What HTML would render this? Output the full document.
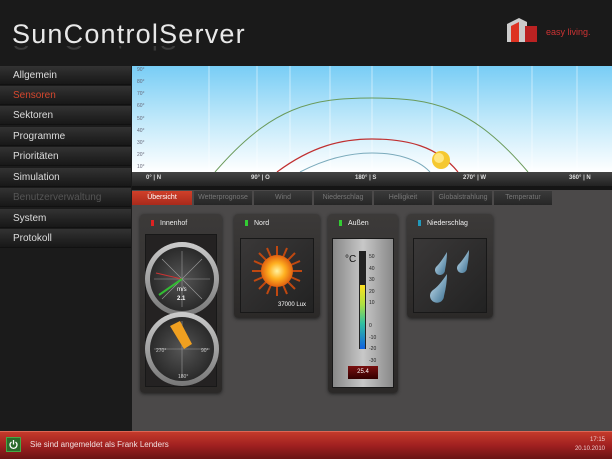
<!DOCTYPE html>
<html><head><meta charset="utf-8"><style>
*{margin:0;padding:0;box-sizing:border-box}
body{width:612px;height:459px;overflow:hidden;background:#1b1b1b;font-family:"Liberation Sans",sans-serif;position:relative}
.a{position:absolute}
.menu div{position:absolute;left:0;width:131px;height:19px;background:linear-gradient(#333,#222 60%,#181818);color:#ddd;font-size:10px;line-height:19px;padding-left:13px;border-bottom:1px solid #111}
.tab{position:absolute;top:191px;height:14px;width:58px;background:linear-gradient(#3a3a3a,#262626);color:#777;font-size:7px;text-align:center;line-height:14px}
.card{position:absolute;background:linear-gradient(#3c3a39,#2b2928);border-radius:4px;box-shadow:0 1px 3px #222}
.card .t{position:absolute;left:20px;top:6px;color:#eee;font-size:7px}
.card .led{position:absolute;left:11px;top:6px;width:3px;height:6px}
.inner{position:absolute;background:#242222;border:1px solid #181818}
.ax{position:absolute;top:175px;color:#ddd;font-size:6px;font-weight:bold}
.yl{position:absolute;left:137px;color:#667;font-size:5px}
</style></head><body>
<div class="a" style="left:0;top:0;width:612px;height:66px;background:#1a1a1a"></div>
<div class="a" style="left:12px;top:20px;color:#e8e8e8;font-size:27px;letter-spacing:1.2px;font-weight:normal;line-height:28px">SunControlServer</div>
<div class="a" style="left:12px;top:46px;width:250px;height:6px;overflow:hidden"><div style="color:#3a3a3a;font-size:27px;letter-spacing:1.2px;line-height:28px;transform:scaleY(-1);margin-top:-20px">SunControlServer</div></div>
<svg class="a" style="left:505px;top:14px" width="40" height="30"><path d="M2 10 L14 4 L22 8 L22 28 L2 28Z" fill="#ccc"/><path d="M6 12 L14 8 L14 28 L6 28Z" fill="#d32"/><path d="M20 12 L32 12 L32 28 L20 28Z" fill="#b22"/></svg>
<div class="a" style="left:546px;top:27px;color:#c33;font-size:9px">easy living.</div>

<div class="menu">
<div style="top:66px">Allgemein</div>
<div style="top:86px;color:#d4472e">Sensoren</div>
<div style="top:106px">Sektoren</div>
<div style="top:127px">Programme</div>
<div style="top:147px">Prioritäten</div>
<div style="top:168px">Simulation</div>
<div style="top:188px;color:#555">Benutzerverwaltung</div>
<div style="top:209px">System</div>
<div style="top:229px">Protokoll</div>
</div>

<div class="a" style="left:132px;top:66px;width:480px;height:106px;background:linear-gradient(#78cdf5,#bfe8fa 50%,#fff)"></div>
<svg class="a" style="left:132px;top:66px" width="480" height="106">
<g stroke="#fff" stroke-opacity=".5" stroke-width="1">
<line x1="77" y1="0" x2="77" y2="106"/><line x1="125" y1="0" x2="125" y2="106"/><line x1="158" y1="0" x2="158" y2="106"/><line x1="198" y1="0" x2="198" y2="106"/><line x1="240" y1="0" x2="240" y2="106"/><line x1="300" y1="0" x2="300" y2="106"/><line x1="346" y1="0" x2="346" y2="106"/><line x1="400" y1="0" x2="400" y2="106"/><line x1="445" y1="0" x2="445" y2="106"/></g>
<path d="M83 106 C140 40,180 32,240 32 C300 32,340 40,396 106" fill="none" stroke="#6a9a5a" stroke-width="1"/>
<path d="M145 106 C180 80,210 73,240 73 C275 73,305 80,326 106" fill="none" stroke="#c03030" stroke-width="1.2"/>
<path d="M168 106 C195 92,220 87,240 87 C262 87,285 92,298 106" fill="none" stroke="#7aaabb" stroke-width="1"/>
<circle cx="309" cy="94" r="9" fill="#f5c830"/><circle cx="307" cy="92" r="5" fill="#ffe680"/>
</svg>
<div class="yl" style="top:67px">90°</div><div class="yl" style="top:79px">80°</div><div class="yl" style="top:91px">70°</div><div class="yl" style="top:103px">60°</div><div class="yl" style="top:116px">50°</div><div class="yl" style="top:128px">40°</div><div class="yl" style="top:140px">30°</div><div class="yl" style="top:152px">20°</div><div class="yl" style="top:164px">10°</div>
<div class="a" style="left:132px;top:172px;width:480px;height:14px;background:linear-gradient(#444,#222)"></div>
<div class="ax" style="left:146px">0° | N</div><div class="ax" style="left:251px">90° | O</div><div class="ax" style="left:355px">180° | S</div><div class="ax" style="left:463px">270° | W</div><div class="ax" style="left:569px">360° | N</div>
<div class="a" style="left:132px;top:186px;width:480px;height:245px;background:#4b4949"></div>
<div class="a" style="left:132px;top:186px;width:480px;height:4px;background:#151515"></div>
<div class="tab" style="left:132px;width:60px;background:linear-gradient(#d0402a,#a82a1c);color:#fff">Übersicht</div>
<div class="tab" style="left:194px">Wetterprognose</div><div class="tab" style="left:254px">Wind</div><div class="tab" style="left:314px">Niederschlag</div><div class="tab" style="left:374px">Helligkeit</div><div class="tab" style="left:434px">Globalstrahlung</div><div class="tab" style="left:494px">Temperatur</div>

<div class="card" style="left:140px;top:214px;width:82px;height:179px"><div class="led" style="background:#d22"></div><div class="t">Innenhof</div>
<div class="inner" style="left:5px;top:20px;width:72px;height:153px"></div></div>
<svg class="a" style="left:140px;top:240px" width="84" height="150">
<defs><radialGradient id="g"><stop offset="0" stop-color="#555"/><stop offset="1" stop-color="#2a2a2a"/></radialGradient>
<linearGradient id="b" x1="0" y1="0" x2="0" y2="1"><stop offset="0" stop-color="#ccc"/><stop offset="1" stop-color="#777"/></linearGradient></defs>
<circle cx="42" cy="39" r="37" fill="url(#b)"/><circle cx="42" cy="39" r="32" fill="url(#g)"/>
<g stroke="#999" stroke-width=".6"><line x1="42" y1="11" x2="42" y2="67"/><line x1="14" y1="39" x2="70" y2="39"/><line x1="22" y1="19" x2="62" y2="59"/><line x1="62" y1="19" x2="22" y2="59"/></g>
<line x1="42" y1="39" x2="16" y2="33" stroke="#c33" stroke-width="1"/><line x1="42" y1="39" x2="19" y2="55" stroke="#3b3" stroke-width="2"/>
<text x="37" y="51" fill="#fff" font-size="6" font-family="Liberation Sans">m/s</text><text x="37" y="60" fill="#fff" font-size="6" font-weight="bold" font-family="Liberation Sans">2.1</text>
<circle cx="42" cy="109" r="37" fill="url(#b)"/><circle cx="42" cy="109" r="32" fill="url(#g)"/>
<g stroke="#999" stroke-width=".6"><line x1="42" y1="81" x2="42" y2="137"/><line x1="14" y1="109" x2="70" y2="109"/></g>
<path d="M30 86 L40 81 L52 104 L44 109Z" fill="#f0a020"/>
<text x="16" y="112" fill="#ccc" font-size="5" font-family="Liberation Sans">270°</text><text x="61" y="112" fill="#ccc" font-size="5" font-family="Liberation Sans">90°</text><text x="38" y="138" fill="#ccc" font-size="5" font-family="Liberation Sans">180°</text>
</svg>

<div class="card" style="left:234px;top:214px;width:86px;height:104px"><div class="led" style="background:#3c3"></div><div class="t">Nord</div>
<div class="inner" style="left:6px;top:24px;width:74px;height:75px;background:linear-gradient(135deg,#3a3838,#222)"></div>
<svg class="a" style="left:16px;top:30px" width="54" height="54"><g stroke="#c04810" stroke-width="2">
<line x1="27" y1="2" x2="27" y2="52"/><line x1="2" y1="27" x2="52" y2="27"/><line x1="9" y1="9" x2="45" y2="45"/><line x1="45" y1="9" x2="9" y2="45"/><line x1="17" y1="4" x2="37" y2="50"/><line x1="37" y1="4" x2="17" y2="50"/><line x1="4" y1="17" x2="50" y2="37"/><line x1="4" y1="37" x2="50" y2="17"/></g>
<radialGradient id="s"><stop offset="0" stop-color="#fff2a0"/><stop offset=".5" stop-color="#ffb020"/><stop offset="1" stop-color="#e06010"/></radialGradient><circle cx="27" cy="27" r="16" fill="url(#s)"/></svg>
<div class="a" style="left:44px;top:88px;color:#fff;font-size:6px">37000 Lux</div></div>

<div class="card" style="left:328px;top:214px;width:70px;height:179px"><div class="led" style="background:#3c3"></div><div class="t">Außen</div>
<div class="inner" style="left:4px;top:24px;width:62px;height:150px;background:linear-gradient(90deg,#888,#c8c8c8 50%,#888)"></div>
<div class="a" style="left:17px;top:40px;font-size:10px;color:#111">°C</div>
<div class="a" style="left:31px;top:37px;width:7px;height:98px;background:#222"></div>
<div class="a" style="left:32px;top:71px;width:5px;height:64px;background:linear-gradient(#ffe020,#aee040 30%,#30c0a0 60%,#1060e0)"></div>
<div class="a" style="left:41px;top:38px;font-size:5px;color:#222;line-height:11.5px">50<br>40<br>30<br>20<br>10<br><br>0<br>-10<br>-20<br>-30</div>
<div class="a" style="left:20px;top:152px;width:30px;height:13px;background:linear-gradient(#7a1010,#300);color:#fff;font-size:6px;text-align:center;line-height:13px">25.4</div></div>

<div class="card" style="left:407px;top:214px;width:86px;height:104px"><div class="led" style="background:#29b"></div><div class="t">Niederschlag</div>
<div class="inner" style="left:6px;top:24px;width:74px;height:75px;background:linear-gradient(135deg,#3a3838,#222)"></div>
<svg class="a" style="left:18px;top:34px" width="50" height="60"><defs><linearGradient id="d" x1="0" y1="0" x2="1" y2="1"><stop offset="0" stop-color="#cfe8f5"/><stop offset="1" stop-color="#3a6e90"/></linearGradient></defs>
<path d="M22 4 Q16 14 12 18 A5 5 0 1 0 20 22 Q22 12 22 4Z" fill="url(#d)"/>
<path d="M44 2 Q38 12 34 16 A5 5 0 1 0 42 20 Q44 10 44 2Z" fill="url(#d)"/>
<path d="M22 26 Q14 38 8 42 A7 7 0 1 0 19 48 Q22 36 22 26Z" fill="url(#d)"/></svg></div>

<div class="a" style="left:0;top:431px;width:612px;height:28px;background:linear-gradient(#c43a2a,#a02020 50%,#6a1414);border-top:1px solid #d65"></div>
<div class="a" style="left:6px;top:437px;width:15px;height:15px;background:#2a6a2a;border:1px solid #4a4"></div>
<svg class="a" style="left:8px;top:439px" width="11" height="11"><path d="M3.5 3 A3.5 3.5 0 1 0 7.5 3" fill="none" stroke="#fff" stroke-width="1.3"/><line x1="5.5" y1="1" x2="5.5" y2="5.5" stroke="#fff" stroke-width="1.3"/></svg>
<div class="a" style="left:30px;top:440px;color:#f0e0e0;font-size:8px">Sie sind angemeldet als Frank Lenders</div>
<div class="a" style="left:560px;top:436px;color:#f0d0d0;font-size:6px;text-align:right;width:45px;line-height:9px">17:15<br>20.10.2010</div>
</body></html>
